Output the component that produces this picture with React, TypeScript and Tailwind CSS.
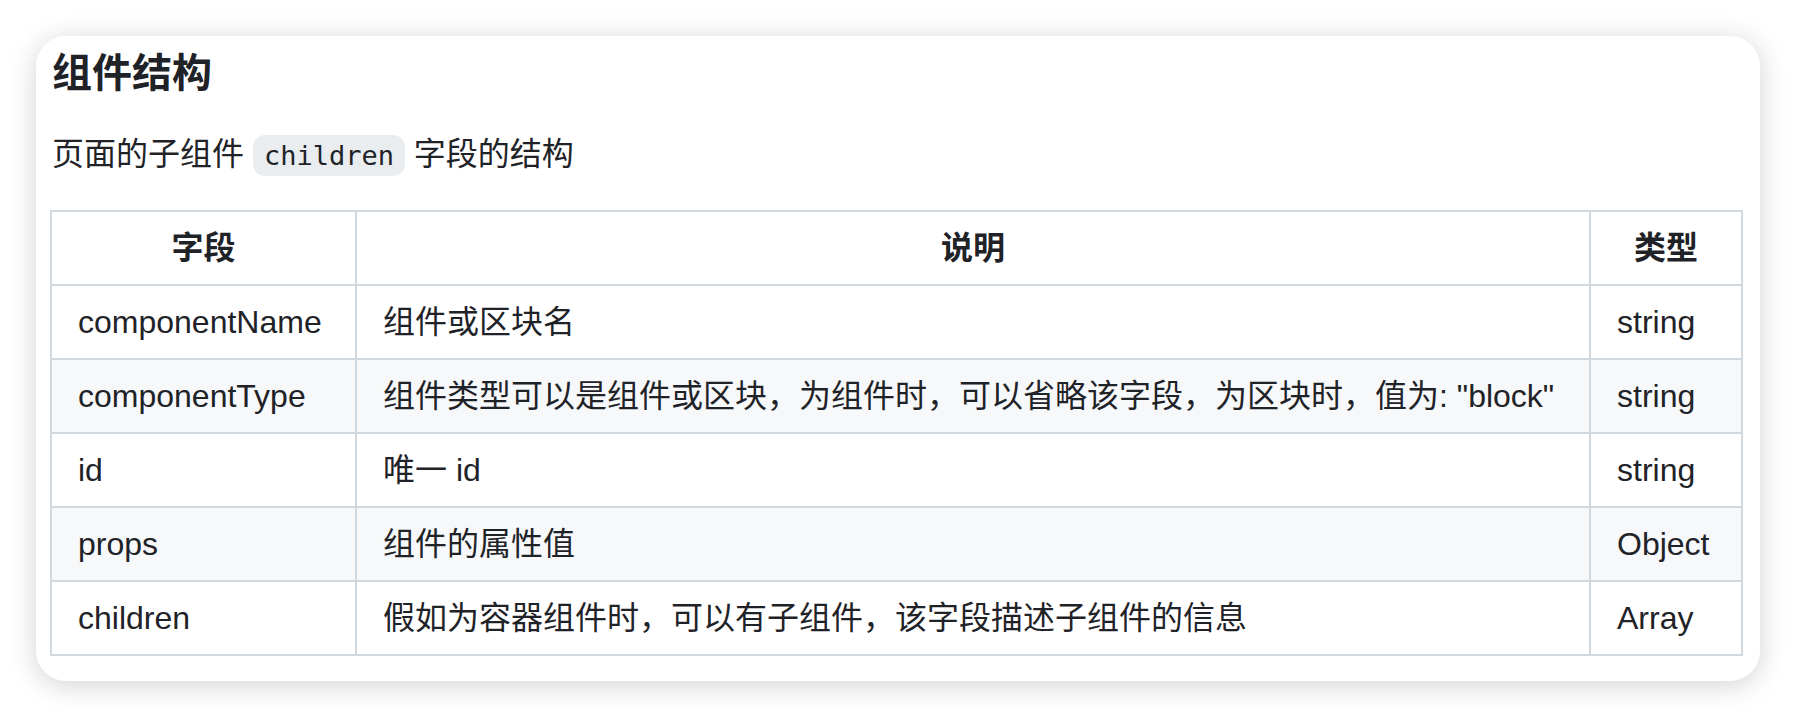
import React from 'react';

interface FieldRow {
  name: string;
  desc: string;
  type: string;
}

const rows: FieldRow[] = [
  { name: 'componentName', desc: '组件或区块名', type: 'string' },
  { name: 'componentType', desc: '组件类型可以是组件或区块，为组件时，可以省略该字段，为区块时，值为: "block"', type: 'string' },
  { name: 'id', desc: '唯一 id', type: 'string' },
  { name: 'props', desc: '组件的属性值', type: 'Object' },
  { name: 'children', desc: '假如为容器组件时，可以有子组件，该字段描述子组件的信息', type: 'Array' },
];

export default function App() {
  return (
    <div className="min-h-screen bg-white pt-[36px] pl-[36px] font-['Liberation_Sans','Noto_Sans_CJK_SC',sans-serif] text-[#1f2328]">
      <div className="w-[1724px] rounded-[30px] bg-white pt-[12px] pb-[25px] pl-[14px] shadow-[0_4px_28px_rgba(0,0,0,0.18)]">
        {/* 标题 */}
        <h3 className="pl-[2px] text-[40px] leading-[50px] font-bold">组件结构</h3>

        {/* 说明文字 */}
        <p className="mt-[32px] pl-[2px] text-[32px] leading-[48px]">
          页面的子组件{' '}
          <code className="rounded-[12px] bg-[#eaedf0] px-[11px] py-[5px] font-['DejaVu_Sans_Mono',monospace] text-[27px]">
            children
          </code>{' '}
          字段的结构
        </p>

        {/* 字段表格 */}
        <table className="mt-[30px] w-[1693px] border-collapse text-[32px] leading-[48px]">
          <thead>
            <tr className="bg-white">
              <th className="w-[305px] border-2 border-[#d1d9e0] px-[26px] py-[12px] text-center font-bold">字段</th>
              <th className="border-2 border-[#d1d9e0] px-[26px] py-[12px] text-center font-bold">说明</th>
              <th className="w-[152px] border-2 border-[#d1d9e0] px-[26px] py-[12px] text-center font-bold">类型</th>
            </tr>
          </thead>
          <tbody>
            {rows.map((row, i) => (
              <tr key={row.name} className={i % 2 === 1 ? 'bg-[#f6f8fa]' : 'bg-white'}>
                <td className="border-2 border-[#d1d9e0] px-[26px] py-[12px] text-left">{row.name}</td>
                <td className="border-2 border-[#d1d9e0] px-[26px] py-[12px] text-left whitespace-nowrap">{row.desc}</td>
                <td className="border-2 border-[#d1d9e0] px-[26px] py-[12px] text-left">{row.type}</td>
              </tr>
            ))}
          </tbody>
        </table>
      </div>
    </div>
  );
}
